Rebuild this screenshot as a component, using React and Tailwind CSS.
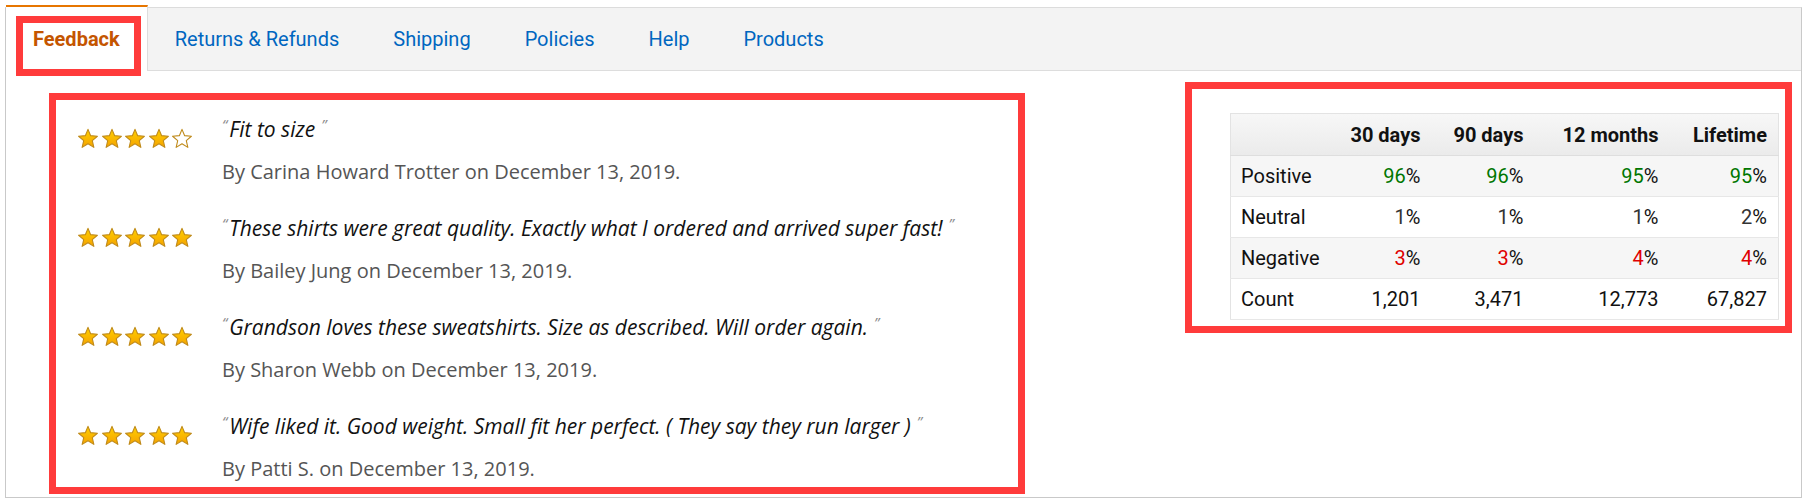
import React from 'react';

const TABS = ['Returns & Refunds', 'Shipping', 'Policies', 'Help', 'Products'];

const REVIEWS = [
  { stars: 4, text: 'Fit to size', by: 'Carina Howard Trotter' },
  { stars: 5, text: 'These shirts were great quality. Exactly what I ordered and arrived super fast!', by: 'Bailey Jung' },
  { stars: 5, text: 'Grandson loves these sweatshirts. Size as described. Will order again.', by: 'Sharon Webb' },
  { stars: 5, text: 'Wife liked it. Good weight. Small fit her perfect. ( They say they run larger )', by: 'Patti S.' },
];

const ROWS = [
  { label: 'Positive', vals: ['96', '96', '95', '95'], color: 'text-[#007600]', pct: true, bg: 'bg-[#f6f6f6]' },
  { label: 'Neutral', vals: ['1', '1', '1', '2'], color: 'text-[#333]', pct: true, bg: 'bg-white' },
  { label: 'Negative', vals: ['3', '3', '4', '4'], color: 'text-[#e00000]', pct: true, bg: 'bg-[#f6f6f6]' },
  { label: 'Count', vals: ['1,201', '3,471', '12,773', '67,827'], color: 'text-[#111]', pct: false, bg: 'bg-white' },
];

const COL_W = ['w-[110px]', 'w-[91px]', 'w-[103px]', 'w-[135px]', 'w-[109px]'];

function Star({ filled }) {
  return (
    <svg viewBox="0 0 24 23" className="w-[22px] h-[21px]">
      <defs>
        <linearGradient id="starFill" x1="0" y1="0" x2="0" y2="1">
          <stop offset="0" stopColor="#ffd000" />
          <stop offset="1" stopColor="#f5a300" />
        </linearGradient>
      </defs>
      <polygon
        points="12,1.5 14.9,8.4 22.3,9 16.7,13.9 18.4,21.2 12,17.3 5.6,21.2 7.3,13.9 1.7,9 9.1,8.4"
        fill={filled ? 'url(#starFill)' : '#ffffff'}
        stroke="#bf8a1a"
        strokeWidth="1.2"
        strokeLinejoin="round"
      />
    </svg>
  );
}

export default function App() {
  return (
    <div className="bg-white min-h-[501px] pt-[7px] pl-[5px]" style={{ fontFamily: 'Roboto, "Liberation Sans", sans-serif' }}>
      <div className="w-[1797px] h-[491px] border border-[#c9c9c9] border-t-[#dcdcdc] flex flex-col">
        {/* Tabs */}
        <div className="flex h-[63px] bg-[#f3f3f3] border-b border-[#dddddd] shrink-0">
          <div className="relative -mt-[3px] h-[66px] bg-white border-t-2 border-t-[#e77600] border-r border-r-[#dddddd] px-[27px] flex items-center">
            <span className="text-[20px] font-bold text-[#c45500]">Feedback</span>
            <div className="absolute left-[10px] top-[9px] w-[125px] h-[60px] border-[7px] border-[#ff3b3b] z-10" />
          </div>
          {TABS.map(t => (
            <div key={t} className="px-[27px] flex items-center">
              <span className="text-[20px] text-[#0066c0]">{t}</span>
            </div>
          ))}
        </div>

        {/* Content */}
        <div className="flex justify-between items-start">
          {/* Reviews */}
          <div
            className="ml-[43px] mt-[22px] w-[976px] border-[7px] border-[#ff3b3b] pl-[21px] pt-[17px] pb-[6px]"
            style={{ fontFamily: '"Open Sans", Roboto, sans-serif' }}
          >
            {REVIEWS.map((r, i) => (
              <div key={i} className={`flex ${i < REVIEWS.length - 1 ? 'mb-[32px]' : ''}`}>
                <div className="w-[145px] shrink-0 pt-[11px] flex gap-[1.5px]">
                  {[0, 1, 2, 3, 4].map(s => <Star key={s} filled={s < r.stars} />)}
                </div>
                <div>
                  <div className="h-[24px] text-[21px] leading-[24px] italic text-[#111] whitespace-nowrap">
                    <span className="relative -top-[7px] text-[15px] leading-none text-[#8a8a8a] mr-[2px]">“</span>
                    {r.text}
                    <span className="relative -top-[7px] text-[15px] leading-none text-[#8a8a8a] ml-[6px]">”</span>
                  </div>
                  <div className="mt-[19px] h-[24px] text-[20px] leading-[24px] text-[#555] whitespace-nowrap">
                    By {r.by} on December 13, 2019.
                  </div>
                </div>
              </div>
            ))}
          </div>

          {/* Feedback table */}
          <div className="mr-[9px] mt-[11px] w-[607px] border-[7px] border-[#ff3b3b] pl-[38px] pr-[7px] pt-[24px] pb-[6px]">
            <table className="w-[548px] border-collapse border border-[#e3e3e3] text-[20px] text-[#111] table-fixed">
              <thead>
                <tr className="h-[42px] bg-gradient-to-b from-[#f7f7f7] to-[#ebebeb] border-b border-[#dedede]">
                  <th className={COL_W[0]}></th>
                  <th className={`${COL_W[1]} text-right pr-[11px] font-bold`}>30 days</th>
                  <th className={`${COL_W[2]} text-right pr-[11px] font-bold`}>90 days</th>
                  <th className={`${COL_W[3]} text-right pr-[11px] font-bold`}>12 months</th>
                  <th className={`${COL_W[4]} text-right pr-[11px] font-bold`}>Lifetime</th>
                </tr>
              </thead>
              <tbody>
                {ROWS.map(row => (
                  <tr key={row.label} className={`h-[41px] border-b border-[#e7e7e7] ${row.bg}`}>
                    <td className="pl-[10px] text-left">{row.label}</td>
                    {row.vals.map((v, j) => (
                      <td key={j} className="text-right pr-[11px]">
                        <span className={row.color}>{v}</span>
                        {row.pct && <span>%</span>}
                      </td>
                    ))}
                  </tr>
                ))}
              </tbody>
            </table>
          </div>
        </div>
      </div>
    </div>
  );
}
